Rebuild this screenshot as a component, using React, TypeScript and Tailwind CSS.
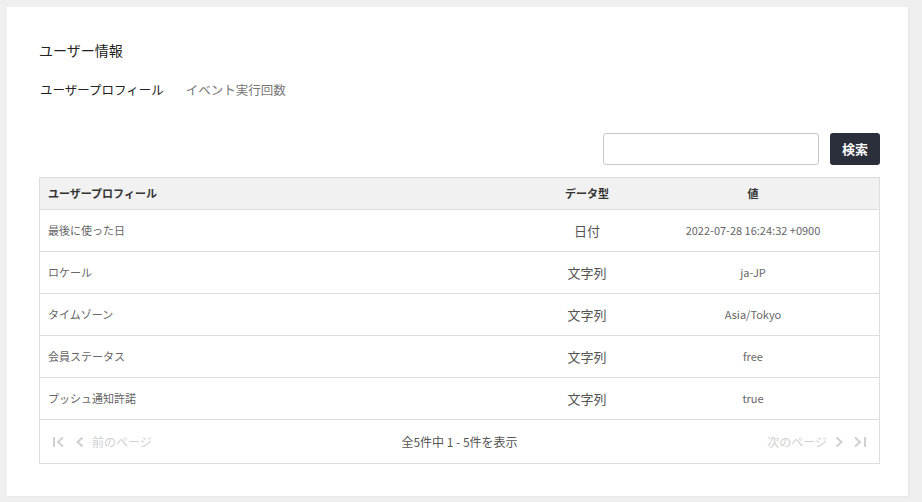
import React from "react";

const font = { fontFamily: '"Noto Sans CJK JP", "Noto Sans", sans-serif' };

const rows = [
  { name: "最後に使った日", type: "日付", value: "2022-07-28 16:24:32 +0900" },
  { name: "ロケール", type: "文字列", value: "ja-JP" },
  { name: "タイムゾーン", type: "文字列", value: "Asia/Tokyo" },
  { name: "会員ステータス", type: "文字列", value: "free" },
  { name: "プッシュ通知許諾", type: "文字列", value: "true" },
];

function FirstIcon() {
  return (
    <svg width="14" height="12" viewBox="0 0 14 12" fill="none" stroke="#d0d0d0" strokeWidth="2">
      <line x1="2" y1="1" x2="2" y2="11" />
      <polyline points="11,1.5 6,6 11,10.5" />
    </svg>
  );
}
function PrevIcon() {
  return (
    <svg width="8" height="12" viewBox="0 0 8 12" fill="none" stroke="#d0d0d0" strokeWidth="2">
      <polyline points="6.5,1.5 1.5,6 6.5,10.5" />
    </svg>
  );
}
function NextIcon() {
  return (
    <svg width="8" height="12" viewBox="0 0 8 12" fill="none" stroke="#d0d0d0" strokeWidth="2">
      <polyline points="1.5,1.5 6.5,6 1.5,10.5" />
    </svg>
  );
}
function LastIcon() {
  return (
    <svg width="14" height="12" viewBox="0 0 14 12" fill="none" stroke="#d0d0d0" strokeWidth="2">
      <polyline points="2,1.5 7,6 2,10.5" />
      <line x1="12" y1="1" x2="12" y2="11" />
    </svg>
  );
}

export default function App() {
  return (
    <div className="w-[922px] h-[502px] bg-[#efefef] pt-[7px] pl-[7px]" style={font}>
      <div className="w-[901px] h-[489px] bg-white pl-[32px] pt-[33px] shadow-[1px_1px_2px_rgba(0,0,0,0.04)]">
        <div className="text-[14px] leading-[20px] text-[#222]">ユーザー情報</div>
        <div className="flex mt-[20px] text-[12.5px] leading-[20px]">
          <span className="text-[#222] pl-[1px]">ユーザープロフィール</span>
          <span className="text-[#777] ml-[22px]">イベント実行回数</span>
        </div>
        <div className="w-[841px] flex justify-end mt-[33px]">
          <input className="w-[216px] h-[32px] border border-[#c8c8c8] rounded-[3px] outline-none" />
          <button className="ml-[11px] w-[50px] h-[32px] rounded-[3px] bg-[#2b2e3b] text-white text-[13px] font-bold">検索</button>
        </div>
        <div className="w-[841px] mt-[12px] border border-[#dcdcdc]">
          <div className="flex h-[32px] items-center bg-[#f1f1f1] border-b border-[#dcdcdc] text-[11px] font-bold text-[#333]">
            <div className="w-[507px] pl-[8px]">ユーザープロフィール</div>
            <div className="w-[80px] text-center">データ型</div>
            <div className="flex-1 text-center">値</div>
          </div>
          {rows.map((r) => (
            <div key={r.name} className="flex h-[42px] items-center border-b border-[#dcdcdc] text-[#666]">
              <div className="w-[507px] pl-[8px] text-[11px]">{r.name}</div>
              <div className="w-[80px] text-center text-[13px] text-[#555]">{r.type}</div>
              <div className="flex-1 text-center text-[11px]">{r.value}</div>
            </div>
          ))}
          <div className="flex h-[43px] items-center px-[12px] text-[12px]">
            <div className="flex items-center w-[260px] text-[#d0d0d0]">
              <FirstIcon />
              <span className="ml-[10px]"><PrevIcon /></span>
              <span className="ml-[8px]">前のページ</span>
            </div>
            <div className="flex-1 text-center text-[#555]">全5件中 1 - 5件を表示</div>
            <div className="flex items-center justify-end w-[260px] text-[#d0d0d0]">
              <span className="mr-[8px]">次のページ</span>
              <NextIcon />
              <span className="ml-[10px]"><LastIcon /></span>
            </div>
          </div>
        </div>
      </div>
    </div>
  );
}
